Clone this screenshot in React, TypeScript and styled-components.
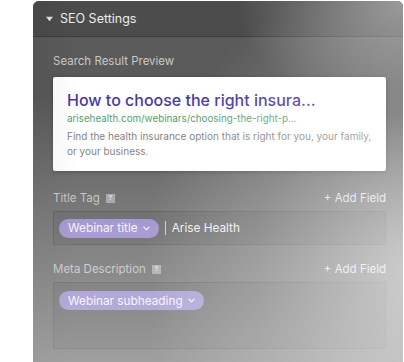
import React from 'react';
import styled, { createGlobalStyle } from 'styled-components';

const GlobalStyle = createGlobalStyle`
  html, body {
    margin: 0;
    padding: 0;
    background: #ffffff;
    font-family: Inter, "Liberation Sans", sans-serif;
  }
`;

type Field = {
  label: string;
  token: string;
  text?: string;
  tall?: boolean;
};

const fields: Field[] = [
  { label: 'Title Tag', token: 'Webinar title', text: 'Arise Health' },
  { label: 'Meta Description', token: 'Webinar subheading', tall: true },
];

export default function App() {
  return (
    <>
      <GlobalStyle />
      <Page>
        <Panel>
          <Header>
            <Caret viewBox="0 0 8 6">
              <path d="M0 0.5 L8 0.5 L4 5.5 Z" fill="currentColor" />
            </Caret>
            SEO Settings
          </Header>
          <Body>
            <SectionLabel>Search Result Preview</SectionLabel>
            <PreviewCard>
              <PreviewTitle>How to choose the right insura...</PreviewTitle>
              <PreviewUrl>arisehealth.com/webinars/choosing-the-right-p...</PreviewUrl>
              <PreviewText>
                Find the health insurance option that is right for you, your family, or your business.
              </PreviewText>
            </PreviewCard>
            {fields.map((f) => (
              <FieldBlock key={f.label}>
                <FieldHead>
                  <FieldLabel>
                    {f.label}
                    <Help>?</Help>
                  </FieldLabel>
                  <AddField>+ Add Field</AddField>
                </FieldHead>
                <InputBox $tall={f.tall}>
                  <Token>
                    {f.token}
                    <Chevron viewBox="0 0 8 5">
                      <path d="M1 1 L4 4 L7 1" fill="none" stroke="currentColor" strokeWidth="1.4" strokeLinecap="round" strokeLinejoin="round" />
                    </Chevron>
                  </Token>
                  {f.text && <Static>{f.text}</Static>}
                </InputBox>
              </FieldBlock>
            ))}
          </Body>
          <Fade />
        </Panel>
      </Page>
    </>
  );
}

const Page = styled.div`
  width: 404px;
  height: 362px;
  overflow: hidden;
  padding: 1px 1px 0 33px;
  box-sizing: border-box;
`;

const Panel = styled.section`
  position: relative;
  height: 380px;
  border-radius: 6px 6px 0 0;
  background: #5a5a5a;
  overflow: hidden;
`;

const Header = styled.div`
  display: flex;
  align-items: center;
  gap: 7px;
  height: 35px;
  padding: 0 12px 0 13px;
  background: #4c4c4c;
  border-bottom: 1px solid #3c3c3c;
  color: #ececec;
  font-size: 12.5px;
  font-weight: 400;
`;

const Caret = styled.svg`
  width: 7px;
  height: 6px;
  color: #e6e6e6;
`;

const Body = styled.div`
  display: flex;
  flex-direction: column;
  padding: 17px 17px 0 20px;
`;

const SectionLabel = styled.div`
  color: #c8c8c8;
  font-size: 11.5px;
  margin-bottom: 9px;
`;

const PreviewCard = styled.div`
  background: #ffffff;
  border-radius: 2px;
  padding: 13px 14px 12px 14px;
  box-shadow: 0 1px 4px rgba(0, 0, 0, 0.35);
  margin-bottom: 20px;
`;

const PreviewTitle = styled.div`
  color: #4637a3;
  font-size: 16px;
  font-weight: 500;
  line-height: 20px;
`;

const PreviewUrl = styled.div`
  color: #4e9a6a;
  font-size: 9.8px;
  line-height: 14px;
  margin-top: 2px;
`;

const PreviewText = styled.div`
  color: #7a7a7a;
  font-size: 10px;
  line-height: 15px;
  margin-top: 3px;
`;

const FieldBlock = styled.div`
  display: flex;
  flex-direction: column;
  margin-bottom: 17px;
`;

const FieldHead = styled.div`
  display: flex;
  justify-content: space-between;
  align-items: center;
  margin-bottom: 6px;
`;

const FieldLabel = styled.div`
  display: flex;
  align-items: center;
  gap: 6px;
  color: #bcbcbc;
  font-size: 11.5px;
`;

const Help = styled.span`
  display: inline-flex;
  align-items: center;
  justify-content: center;
  width: 9px;
  height: 9px;
  background: #999999;
  color: #dadada;
  font-size: 6.5px;
  font-weight: 700;
`;

const AddField = styled.div`
  color: #ddd8ef;
  font-size: 11.5px;
  font-weight: 400;
`;

const InputBox = styled.div<{ $tall?: boolean }>`
  display: flex;
  align-items: ${(p) => (p.$tall ? 'flex-start' : 'center')};
  gap: 6px;
  height: ${(p) => (p.$tall ? '67px' : '34px')};
  box-sizing: border-box;
  padding: ${(p) => (p.$tall ? '8px 5px' : '0 5px')};
  background: rgba(0, 0, 0, 0.1);
  border: 1px solid rgba(0, 0, 0, 0.2);
  border-radius: 2px;
`;

const Token = styled.span`
  display: inline-flex;
  align-items: center;
  gap: 5px;
  height: 19px;
  padding: 0 9px;
  border-radius: 10px;
  background: #8e7fc7;
  color: #f4f2fb;
  font-size: 11.8px;
`;

const Chevron = styled.svg`
  width: 7px;
  height: 5px;
`;

const Static = styled.span`
  border-left: 1px solid #c4c4c4;
  padding-left: 6px;
  color: #ececec;
  font-size: 11.8px;
  line-height: 14px;
`;

const Fade = styled.div`
  position: absolute;
  inset: 0;
  pointer-events: none;
  background:
    radial-gradient(ellipse 75% 80% at 105% 70%, rgba(255, 255, 255, 0.6), rgba(255, 255, 255, 0.2) 60%, rgba(255, 255, 255, 0) 100%),
    radial-gradient(ellipse 45% 30% at 100% 0%, rgba(255, 255, 255, 0.4), rgba(255, 255, 255, 0) 100%),
    linear-gradient(180deg, rgba(255, 255, 255, 0) 0%, rgba(255, 255, 255, 0) 25%, rgba(255, 255, 255, 0.25) 65%, rgba(255, 255, 255, 0.45) 100%),
    linear-gradient(90deg, rgba(0, 0, 0, 0.06) 0%, rgba(0, 0, 0, 0) 12%);
`;
